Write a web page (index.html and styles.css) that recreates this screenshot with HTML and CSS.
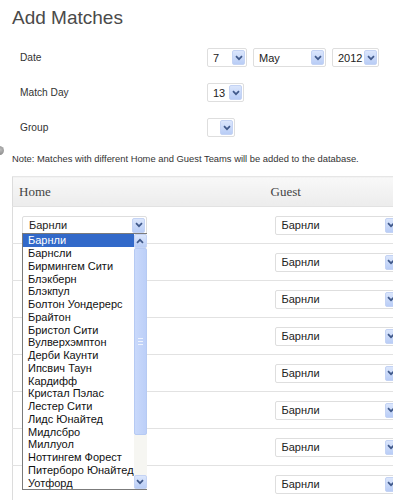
FILE: index.html
```html
<!DOCTYPE html>
<html lang="ru">
<head>
    <meta charset="UTF-8">
    <meta name="viewport" content="width=device-width, initial-scale=1.0">
    <title>Add Matches</title>
    <link rel="stylesheet" href="styles.css">
</head>
<body>
    <div class="page">
        <span class="dot"></span>
        <h1>Add Matches</h1>
        <div class="fields">
            <div class="field">
                <span class="label">Date</span>
                <div class="controls">
                    <div class="select w-day"><span class="val">7</span><span class="arrow"><svg viewBox="0 0 8 6" width="8" height="6"><path d="M1 1.2l3 3 3-3" fill="none" stroke="#40598a" stroke-width="1.7"/></svg></span></div>
                    <div class="select w-month"><span class="val">May</span><span class="arrow"><svg viewBox="0 0 8 6" width="8" height="6"><path d="M1 1.2l3 3 3-3" fill="none" stroke="#40598a" stroke-width="1.7"/></svg></span></div>
                    <div class="select w-year"><span class="val">2012</span><span class="arrow"><svg viewBox="0 0 8 6" width="8" height="6"><path d="M1 1.2l3 3 3-3" fill="none" stroke="#40598a" stroke-width="1.7"/></svg></span></div>
                </div>
            </div>
            <div class="field">
                <span class="label">Match Day</span>
                <div class="controls">
                    <div class="select w-mday"><span class="val">13</span><span class="arrow"><svg viewBox="0 0 8 6" width="8" height="6"><path d="M1 1.2l3 3 3-3" fill="none" stroke="#40598a" stroke-width="1.7"/></svg></span></div>
                </div>
            </div>
            <div class="field">
                <span class="label">Group</span>
                <div class="controls">
                    <div class="select w-group"><span class="val"></span><span class="arrow"><svg viewBox="0 0 8 6" width="8" height="6"><path d="M1 1.2l3 3 3-3" fill="none" stroke="#40598a" stroke-width="1.7"/></svg></span></div>
                </div>
            </div>
        </div>
        <p class="note">Note: Matches with different Home and Guest Teams will be added to the database.</p>

        <table class="matches">
            <colgroup><col class="c-home"><col></colgroup>
            <thead>
                <tr><th>Home</th><th>Guest</th></tr>
            </thead>
            <tbody id="rows"></tbody>
        </table>
    </div>

    <script>
        // Заполняем строки матчей
        const teams = ['Барнли', 'Барнсли', 'Бирмингем Сити', 'Блэкберн', 'Блэкпул', 'Болтон Уондерерс',
            'Брайтон', 'Бристол Сити', 'Вулверхэмптон', 'Дерби Каунти', 'Ипсвич Таун', 'Кардифф',
            'Кристал Пэлас', 'Лестер Сити', 'Лидс Юнайтед', 'Мидлсбро', 'Миллуол', 'Ноттингем Форест',
            'Питерборо Юнайтед', 'Уотфорд'];
        const arrow = '<span class="arrow"><svg viewBox="0 0 8 6" width="8" height="6"><path d="M1 1.2l3 3 3-3" fill="none" stroke="#40598a" stroke-width="1.7"/></svg></span>';
        const rows = document.getElementById('rows');

        for (let i = 0; i < 8; i++) {
            const tr = document.createElement('tr');
            // селекты под открытым списком не видны
            let home = `<div class="select w-team${i > 0 ? ' under' : ''}"><span class="val">Барнли</span>${arrow}</div>`;
            if (i === 0) {
                // открытый список у первой строки
                let items = teams.map((t, n) => `<li class="${n === 0 ? 'active' : ''}">${t}</li>`).join('');
                home = '<div class="pick">' + home +
                    '<div class="dropdown"><ul>' + items + '</ul>' +
                    '<div class="scrollbar">' +
                    '<span class="sb-btn"><svg viewBox="0 0 8 6" width="8" height="6"><path d="M1 4.8l3-3 3 3" fill="none" stroke="#40598a" stroke-width="1.7"/></svg></span>' +
                    '<span class="sb-thumb"><i></i></span><span class="sb-track"></span>' +
                    '<span class="sb-btn"><svg viewBox="0 0 8 6" width="8" height="6"><path d="M1 1.2l3 3 3-3" fill="none" stroke="#40598a" stroke-width="1.7"/></svg></span>' +
                    '</div></div></div>';
            }
            tr.innerHTML = `<td class="col-home">${home}</td><td class="col-guest"><div class="select w-team"><span class="val">Барнли</span>${arrow}</div></td>`;
            rows.appendChild(tr);
        }
    </script>
</body>
</html>
```

FILE: styles.css
```css
/* CSS Style */
body {
    font-family: "Liberation Sans", Arial, sans-serif;
    background-color: #fff;
    color: #333;
    margin: 0;
    padding: 0;
    overflow: hidden;
}
.page {
    position: relative;
    padding-left: 12px;
    overflow: hidden;
}
.dot {
    position: absolute;
    left: -5px;
    top: 146px;
    width: 9px;
    height: 9px;
    border-radius: 50%;
    background: radial-gradient(circle at 60% 40%, #bbb, #777);
}
h1 {
    margin: 0;
    padding-top: 5px;
    font-size: 19px;
    line-height: 25px;
    font-weight: normal;
    color: #4a4a4a;
}
.fields {
    margin-top: 10px;
}
.field {
    display: flex;
    align-items: center;
    height: 35px;
}
.label {
    box-sizing: border-box;
    width: 195px;
    padding-left: 8px;
    font-size: 10.2px;
    color: #333;
}
.controls {
    display: flex;
    gap: 6px;
}
.select {
    display: inline-flex;
    align-items: center;
    box-sizing: border-box;
    height: 19px;
    padding: 1px;
    border: 1px solid #dedede;
    border-radius: 2px;
    background-color: #fff;
    font-size: 11px;
    color: #222;
}
.select .val {
    flex: 1;
    padding-left: 4px;
    white-space: nowrap;
}
.select.under {
    visibility: hidden;
}
.arrow, .sb-btn {
    display: flex;
    align-items: center;
    justify-content: center;
    box-sizing: border-box;
    width: 13px;
    height: 15px;
    border: 1px solid #c4d3f4;
    border-radius: 2px;
    background: linear-gradient(#dbe6fc, #b9cdf6);
}
.w-day { width: 40px; }
.w-month { width: 73px; }
.w-year { width: 47px; }
.w-mday { width: 37px; }
.w-group { width: 28px; }
.w-team { width: 125px; }
.w-team .val { padding-left: 5px; }
.note {
    margin: 7px 0 0 0;
    font-size: 9.4px;
    line-height: 14px;
    color: #333;
}
.matches {
    margin-top: 10px;
    width: 430px;
    table-layout: fixed;
    border-collapse: collapse;
    border-left: 1px solid #dcdcdc;
}
.matches col.c-home {
    width: 252px;
}
.matches th {
    height: 29px;
    padding: 0 0 0 6px;
    text-align: left;
    font-family: "Liberation Serif", "Times New Roman", serif;
    font-size: 13px;
    font-weight: normal;
    color: #444;
    background: linear-gradient(#f8f8f8, #ececec);
    border-top: 1px solid #e6e6e6;
}
.matches td {
    height: 36px;
    padding: 0 0 0 9px;
    border-top: 1px solid #e2e2e2;
    vertical-align: middle;
}
.matches td.col-guest {
    padding-left: 10px;
}
.pick {
    position: relative;
    width: 125px;
}
.dropdown {
    position: absolute;
    top: 18px;
    left: 0;
    z-index: 10;
    display: flex;
    width: 125px;
    box-sizing: border-box;
    border: 1px solid #7b7b7b;
    background-color: #fff;
}
.dropdown ul {
    flex: 1;
    list-style-type: none;
    margin: 0;
    padding: 0;
}
.dropdown li {
    height: 12.75px;
    line-height: 12.75px;
    padding-left: 5px;
    font-size: 11px;
    color: #111;
    white-space: nowrap;
}
.dropdown li.active {
    background-color: #3269c9;
    color: #fff;
}
.scrollbar {
    display: flex;
    flex-direction: column;
    width: 13px;
    background-color: #f6f6f2;
}
.sb-btn {
    height: 14px;
    flex: none;
}
.sb-thumb {
    display: flex;
    align-items: center;
    justify-content: center;
    box-sizing: border-box;
    height: 187px;
    border: 1px solid #b6caf3;
    border-radius: 2px;
    background: linear-gradient(90deg, #c9d9fb, #bccff8);
}
.sb-thumb i {
    width: 5px;
    height: 5px;
    border-top: 1px solid #eef3fd;
    border-bottom: 1px solid #eef3fd;
    background: linear-gradient(transparent 2px, #eef3fd 2px, #eef3fd 3px, transparent 3px);
}
.sb-track {
    flex: 1;
}
```
